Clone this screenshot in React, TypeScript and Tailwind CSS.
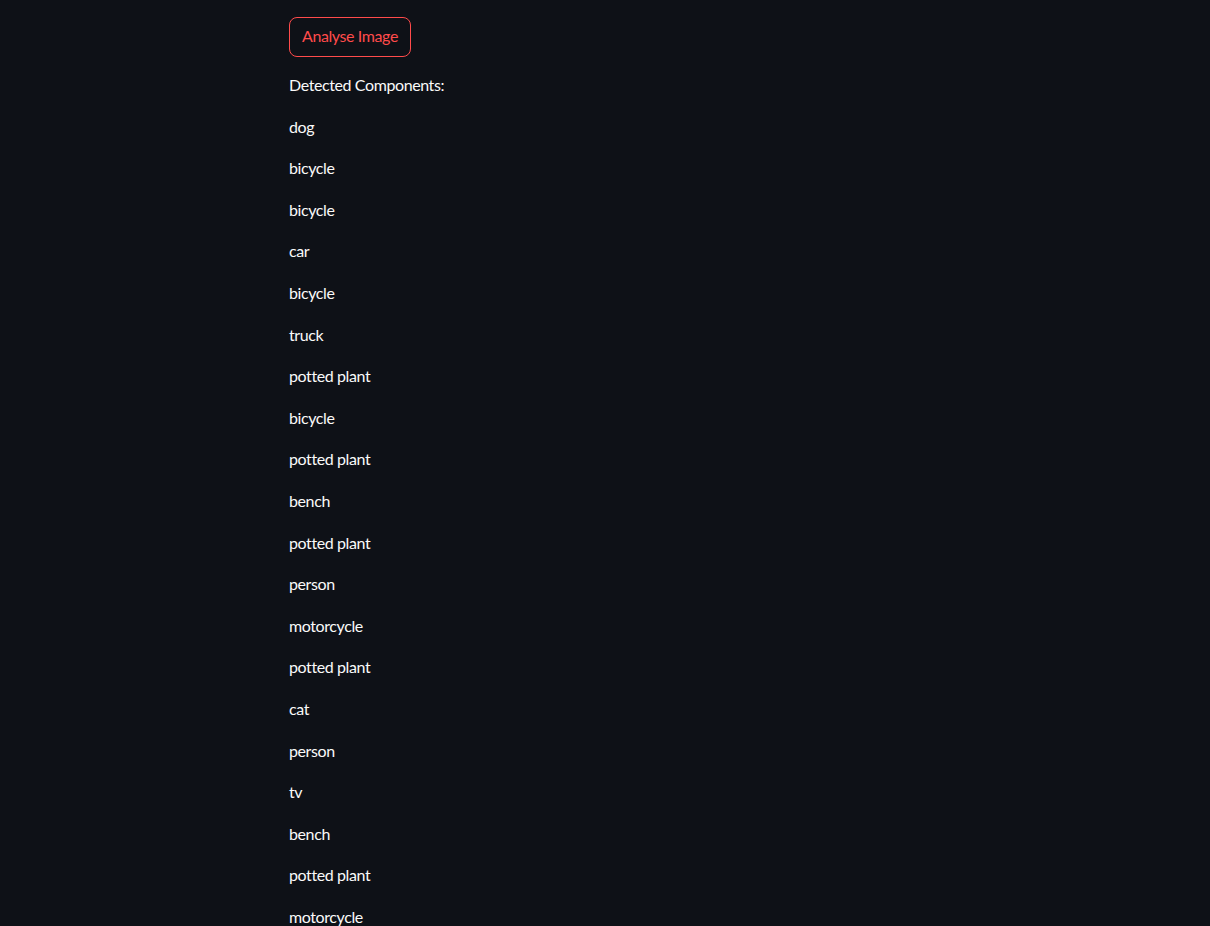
const items = [
  'dog',
  'bicycle',
  'bicycle',
  'car',
  'bicycle',
  'truck',
  'potted plant',
  'bicycle',
  'potted plant',
  'bench',
  'potted plant',
  'person',
  'motorcycle',
  'potted plant',
  'cat',
  'person',
  'tv',
  'bench',
  'potted plant',
  'motorcycle',
];

export default function App() {
  return (
    <div className="min-h-screen bg-[#0e1117] text-[#fafafa] font-['Lato','Liberation_Sans',sans-serif] text-[16px] leading-[25.6px] tracking-[-0.025em]">
      <div className="pl-[289px] pt-[17px]">
        <button className="h-[40px] w-[122px] rounded-[8px] border border-[#ff4b4b] bg-[#0e1117] text-[#ff4b4b] flex items-center justify-center pb-[2px]">
          Analyse Image
        </button>
        <div className="mt-[15px] flex flex-col">
          <p className="mb-[16px]">Detected Components:</p>
          {items.map((item, i) => (
            <p key={i} className="mb-[16px]">
              {item}
            </p>
          ))}
        </div>
      </div>
    </div>
  );
}
